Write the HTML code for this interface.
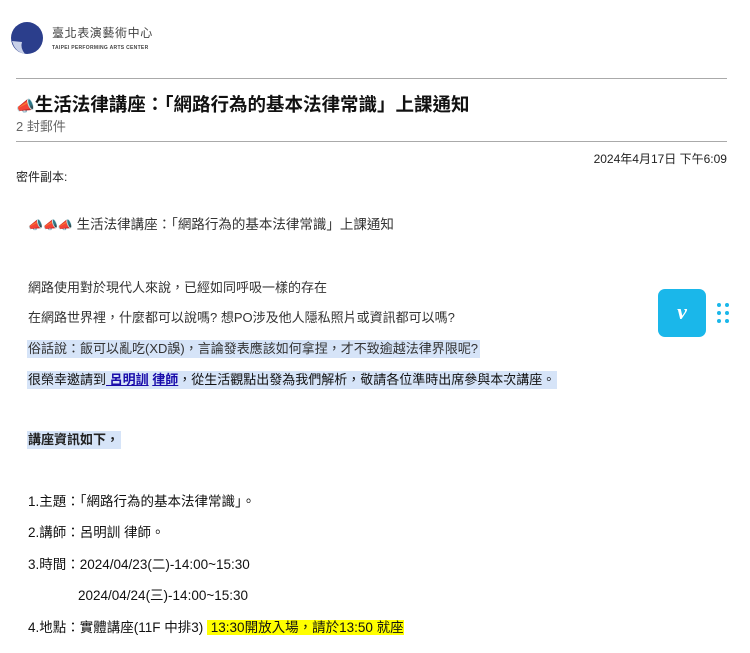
<!DOCTYPE html>
<html><head><meta charset="utf-8"><style>
body{margin:0;width:750px;height:653px;background:#fff;font-family:"Liberation Sans","Noto Sans CJK TC",sans-serif;color:#222;position:relative;overflow:hidden}
.a{position:absolute;white-space:nowrap}
.hr{position:absolute;left:16px;width:711px;height:1px;background:#aaa}
.t{font-size:13px;left:28px;line-height:18px}
.l{font-size:13.5px;color:#111}
.hl{background:#d6e4f8}
a{color:#1a0dab;text-decoration:underline;font-weight:bold}
.yl{background:#ffff00}
</style></head><body>
<svg class="a" style="left:10px;top:21px" width="34" height="34" viewBox="0 0 34 34"><circle cx="17" cy="17" r="16" fill="#2b3e8c"/><path d="M2 20 Q5 31 15 33 Q10 27 12 21 Z" fill="#c8d0e8"/></svg>
<div class="a" style="left:52px;top:24px;font-size:12px;color:#444;letter-spacing:.6px">臺北表演藝術中心</div>
<div class="a" style="left:52px;top:45px;font-size:5px;color:#444;font-weight:bold;letter-spacing:.3px">TAIPEI PERFORMING ARTS CENTER</div>
<div class="hr" style="top:78px"></div>
<div class="a" style="left:16px;top:91px;font-size:18.5px;font-weight:bold;color:#111"><span style="font-size:15px">📣</span>生活法律講座：「網路行為的基本法律常識」上課通知</div>
<div class="a" style="left:16px;top:116px;font-size:13px;color:#666">2 封郵件</div>
<div class="hr" style="top:141px"></div>
<div class="a" style="right:23px;top:150px;font-size:12px">2024年4月17日 下午6:09</div>
<div class="a" style="left:16px;top:168px;font-size:12px">密件副本:</div>
<div class="a t" style="top:216px;color:#333;font-size:13.5px"><span style="font-size:12px">📣📣📣</span> 生活法律講座：「網路行為的基本法律常識」上課通知</div>
<div class="a t" style="top:279px;color:#333">網路使用對於現代人來說，已經如同呼吸一樣的存在</div>
<div class="a t" style="top:309px;color:#333">在網路世界裡，什麼都可以說嗎? 想PO涉及他人隱私照片或資訊都可以嗎?</div>
<div class="a t hl" style="top:340px;left:27px;padding:0 2px 0 1px;color:#333">俗話說：飯可以亂吃(XD誤)，言論發表應該如何拿捏，才不致逾越法律界限呢?</div>
<div class="a t hl" style="top:371px;left:27px;padding:0 2px 0 1px;color:#111">很榮幸邀請到<a> 呂明訓</a> <a>律師</a>，從生活觀點出發為我們解析，敬請各位準時出席參與本次講座。</div>
<div class="a t hl" style="top:431px;left:27px;padding:0 2px 0 1px;font-weight:bold;font-size:13px">講座資訊如下，</div>
<div class="a t l" style="top:493px">1.主題：「網路行為的基本法律常識」。</div>
<div class="a t l" style="top:524px">2.講師：呂明訓 律師。</div>
<div class="a t l" style="top:556px">3.時間：2024/04/23(二)-14:00~15:30</div>
<div class="a t l" style="top:587px;left:78px">2024/04/24(三)-14:00~15:30</div>
<div class="a t l" style="top:619px">4.地點：實體講座(11F 中排3) <span class="yl">&nbsp;13:30開放入場，請於13:50 就座</span></div>
<div class="a" style="left:658px;top:289px;width:48px;height:48px;border-radius:7px;background:#1ab7ea;color:#fff;font:italic bold 22px 'Liberation Serif',serif;text-align:center;line-height:46px">v</div>
<svg class="a" style="left:716px;top:302px" width="14" height="22"><g fill="#1ab7ea"><circle cx="3" cy="3" r="2"/><circle cx="11" cy="3" r="2"/><circle cx="3" cy="11" r="2"/><circle cx="11" cy="11" r="2"/><circle cx="3" cy="19" r="2"/><circle cx="11" cy="19" r="2"/></g></svg>
</body></html>
